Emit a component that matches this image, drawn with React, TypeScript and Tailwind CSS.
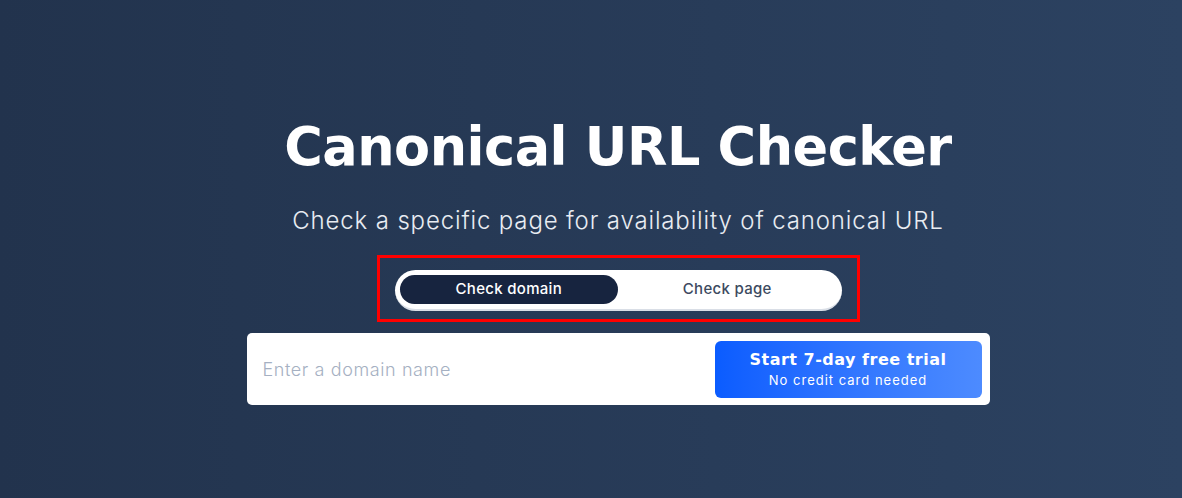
import { useState } from "react";

const font = { fontFamily: '"DejaVu Sans", "Liberation Sans", sans-serif' };

export default function App() {
  const [mode, setMode] = useState<"domain" | "page">("domain");

  return (
    <div className="w-full h-[498px] bg-gradient-to-r from-[#22334d] to-[#2c4261] flex flex-col items-center pl-[54px]" style={font}>
      <h1 className="mt-[115px] text-[52.5px] leading-[64px] font-bold text-white tracking-[-0.5px]">
        Canonical URL Checker
      </h1>
      <p className="mt-[27px] text-[24px] leading-[30px] font-light tracking-[0.85px] text-[#e8ecf2] font-['Inter',sans-serif]">
        Check a specific page for availability of canonical URL
      </p>

      <div className="mt-[19px] border-[3px] border-[#ff0000] px-[15px] pt-[12px] pb-[8px]">
        <div className="w-[447px] h-[41px] bg-white rounded-full border-b-2 border-[#d9dee6] p-[5px] flex">
          <button
            onClick={() => setMode("domain")}
            className={
              "flex-1 rounded-full text-[15px] tracking-[0.3px] font-['Inter',sans-serif] font-medium " +
              (mode === "domain" ? "bg-[#17243f] text-white" : "text-[#3c4a60]")
            }
          >
            Check domain
          </button>
          <button
            onClick={() => setMode("page")}
            className={
              "flex-1 rounded-full text-[15px] tracking-[0.3px] font-['Inter',sans-serif] font-medium " +
              (mode === "page" ? "bg-[#17243f] text-white" : "text-[#3c4a60]")
            }
          >
            Check page
          </button>
        </div>
      </div>

      <div className="mt-[11px] w-[743px] h-[72px] bg-white rounded-[5px] flex items-center pl-[16px] pr-[8px]">
        <input
          className="flex-1 h-full outline-none text-[18px] tracking-[0.6px] font-light text-[#334155] placeholder:text-[#a5b0c2] font-['Inter',sans-serif]"
          placeholder={mode === "domain" ? "Enter a domain name" : "Enter a page URL"}
        />
        <button className="w-[267px] h-[57px] rounded-[6px] bg-gradient-to-r from-[#0a5cff] to-[#4d8bff] text-white flex flex-col items-center justify-center">
          <span className="text-[16px] leading-[20px] font-bold tracking-[0.5px]">Start 7-day free trial</span>
          <span className="text-[13px] leading-[16px] mt-[2px] tracking-[1px] font-['Inter',sans-serif]">No credit card needed</span>
        </button>
      </div>
    </div>
  );
}
